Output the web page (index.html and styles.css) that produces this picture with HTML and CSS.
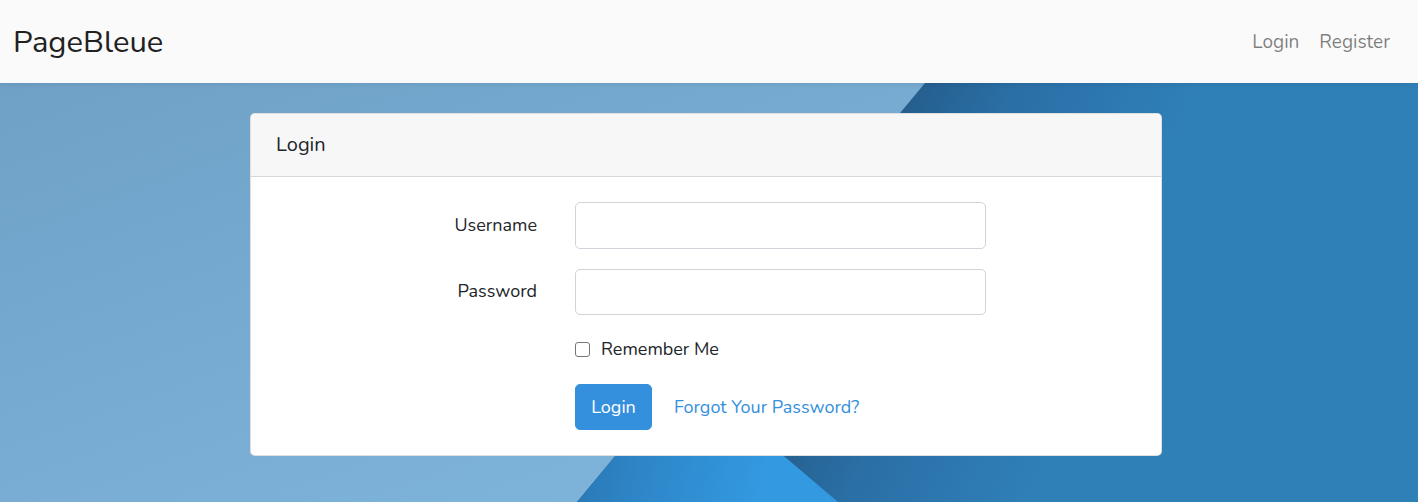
FILE: index.html
```html
<!DOCTYPE html>
<html lang="en">
<head>
<meta charset="utf-8">
<title>PageBleue - Login</title>
<link rel="stylesheet" href="styles.css">
</head>
<body>
<nav class="navbar">
  <a class="brand" href="#">PageBleue</a>
  <ul class="nav-links">
    <li><a href="#">Login</a></li>
    <li><a href="#">Register</a></li>
  </ul>
</nav>
<main class="main">
  <div class="card">
    <div class="card-header">Login</div>
    <div class="card-body">
      <form class="form">
        <label class="label" for="username">Username</label>
        <input class="input" id="username" type="text">
        <label class="label" for="password">Password</label>
        <input class="input" id="password" type="password">
        <div class="cell-offset check-row">
          <input class="checkbox" id="remember" type="checkbox">
          <label for="remember" class="check-label">Remember Me</label>
        </div>
        <div class="cell-offset actions">
          <button class="btn" type="button">Login</button>
          <a class="link" href="#">Forgot Your Password?</a>
        </div>
      </form>
    </div>
  </div>
</main>
</body>
</html>
```
FILE: styles.css
```css
* { box-sizing: border-box; }
html, body { margin: 0; padding: 0; }
body {
  font-family: "Nunito", "Lato", "Open Sans", sans-serif;
  font-size: 18px;
  line-height: 1.6;
  color: #212529;
  height: 502px;
  overflow: hidden;
  display: flex;
  flex-direction: column;
}
a { text-decoration: none; }

.navbar {
  height: 83px;
  flex: none;
  display: flex;
  align-items: center;
  justify-content: space-between;
  padding: 0 28px 0 13px;
  background: #fafafa;
  box-shadow: 0 2px 4px rgba(0,0,0,.06);
  position: relative;
  z-index: 2;
}
.brand {
  font-size: 31px;
  color: #212121;
  line-height: 1;
  padding-top: 1px;
}
.nav-links {
  list-style: none;
  display: flex;
  gap: 20px;
  margin: 0;
  padding: 1px 0 0 0;
}
.nav-links a {
  color: rgba(0,0,0,.5);
  font-size: 19px;
}

.main {
  flex: 1;
  position: relative;
  z-index: 0;
  padding: 30px 0 0 250px;
  background: linear-gradient(112deg, #22557e 0%, #22557e 54%, #2a6fa6 64%, #3080b8 76%, #3080b8 100%);
}
.main::before {
  content: "";
  position: absolute;
  inset: 0;
  z-index: -1;
  background: linear-gradient(160deg, #6fa1c6 0%, #79add4 45%, #84bbe2 100%);
  clip-path: polygon(0 0, 925px 0, 577px 419px, 0 419px);
}
.main::after {
  content: "";
  position: absolute;
  inset: 0;
  z-index: -1;
  background: linear-gradient(100deg, #2568a0 560px, #2e86c8 700px, #3399e0 820px);
  clip-path: polygon(685px 289px, 838px 419px, 577px 419px);
}

.card {
  width: 912px;
  background: #fff;
  border: 1px solid rgba(0,0,0,.125);
  border-radius: 5px;
  overflow: hidden;
}
.card-header {
  background: #f7f7f7;
  border-bottom: 1px solid rgba(0,0,0,.125);
  padding: 16px 25px 17px;
  line-height: 29px;
  font-size: 20px;
}
.card-body {
  padding: 25px 25px 25px;
}
.form {
  display: grid;
  grid-template-columns: 261px 411px;
  column-gap: 38px;
  row-gap: 20px;
  align-items: center;
}
.label {
  text-align: right;
  line-height: 29px;
}
.input {
  height: 46.5px;
  width: 411px;
  border: 1px solid #ced4da;
  border-radius: 5px;
  font: inherit;
  padding: 7px 15px;
  background: #fff;
}
.cell-offset { grid-column: 2; }
.check-row {
  display: flex;
  align-items: center;
  line-height: 29px;
}
.checkbox {
  appearance: none;
  -webkit-appearance: none;
  width: 15px;
  height: 15px;
  margin: 0 11px 0 0;
  border: 1px solid #767676;
  border-radius: 3px;
  background: #fff;
}
.actions {
  display: flex;
  align-items: center;
}
.btn {
  font: inherit;
  font-size: 18px;
  line-height: 29px;
  color: #fff;
  background: #3490dc;
  border: 1px solid #3490dc;
  border-radius: 5px;
  padding: 7px 15px;
  height: 46px;
  min-width: 77px;
}
.link {
  color: #3490dc;
  margin-left: 22px;
}
```
